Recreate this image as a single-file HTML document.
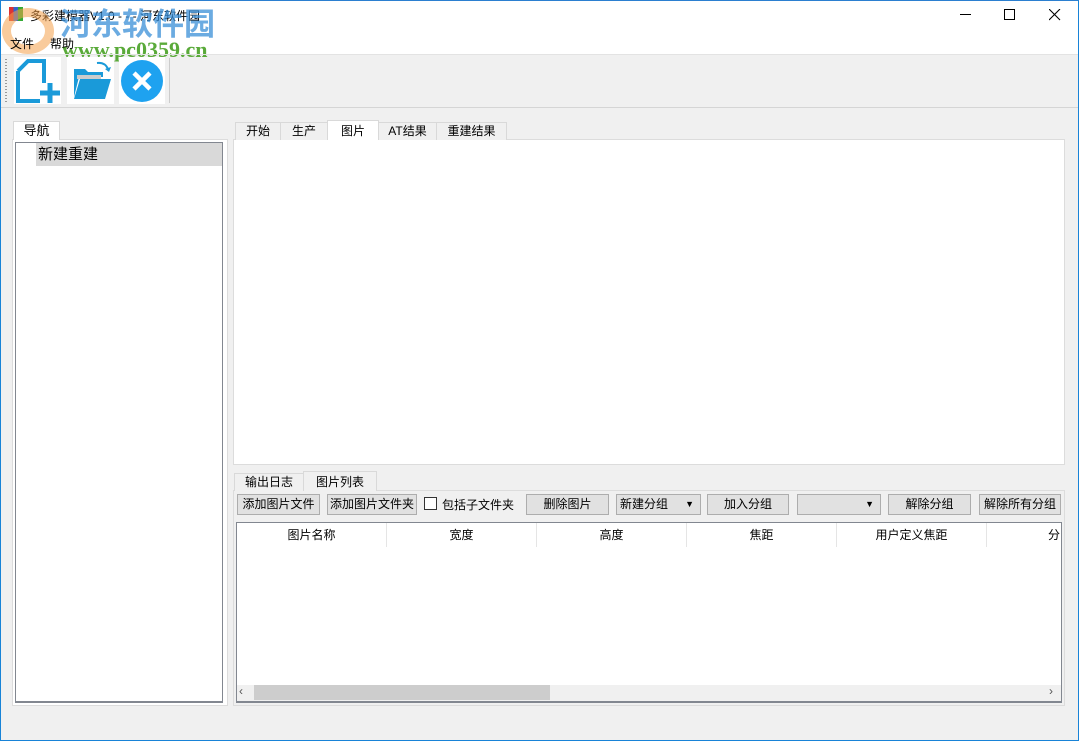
<!DOCTYPE html>
<html><head><meta charset="utf-8"><style>
*{margin:0;padding:0;box-sizing:border-box}
body{width:1079px;height:741px;overflow:hidden;background:#f0f0f0;font-family:"Liberation Sans","Noto Sans CJK SC",sans-serif;font-size:12px;color:#000;position:relative}
.a{position:absolute}
.frame{left:0;top:0;width:1079px;height:741px;border:1px solid #1883d7;border-top-color:#2b7fd0}
.btn{position:absolute;top:494px;height:21px;background:#e1e1e1;border:1px solid #adadad;text-align:center;line-height:19px;font-size:12px}
.tab{position:absolute;height:18px;background:#f0f0f0;border:1px solid #d9d9d9;border-bottom:none;text-align:center;line-height:17px;font-size:12px}
.col{position:absolute;top:523px;height:24px;line-height:24px;text-align:center;width:150px;border-right:1px solid #e5e5e5;font-size:12px}
</style></head><body>
<div class="a" style="left:0;top:0;width:1079px;height:54px;background:#fff"></div>
<div class="a" style="left:9px;top:7px;width:14px;height:14px;background:linear-gradient(90deg,#d33 0 33%,#36c 33% 66%,#3a3 66%)"></div>
<div class="a" style="left:30px;top:7px;font-size:12px">多彩建模器V1.0 - - - 河东软件园</div>
<div class="a" style="left:2px;top:8px;width:52px;height:46px;border-radius:50%;border:9px solid #f4a04a;opacity:.55"></div>
<div class="a" style="left:60px;top:2px;font-size:31px;font-weight:bold;color:#3a8fd8;opacity:.75;font-family:'Noto Sans CJK SC',sans-serif;line-height:40px">河东软件园</div>
<div class="a" style="left:62px;top:38px;font-size:22px;font-weight:bold;color:#5aaa3a;font-family:'Liberation Serif',serif;line-height:24px">www.pc0359.cn</div>
<div class="a" style="left:10px;top:35px;font-size:12px">文件</div>
<div class="a" style="left:50px;top:35px;font-size:12px">帮助</div>
<div class="a" style="left:960px;top:14px;width:11px;height:1px;background:#000"></div>
<div class="a" style="left:1004px;top:9px;width:11px;height:11px;border:1px solid #000"></div>
<svg class="a" style="left:1049px;top:9px" width="12" height="12"><path d="M0 0L11 11M11 0L0 11" stroke="#000" stroke-width="1.1"/></svg>
<div class="a" style="left:0;top:54px;width:1079px;height:1px;background:#e3e3e3"></div>
<div class="a" style="left:5px;top:59px;width:2px;height:43px;background:repeating-linear-gradient(#999 0 1px,transparent 1px 3px)"></div>
<div class="a" style="left:14px;top:57px;width:47px;height:47px;background:#fff"></div>
<svg class="a" style="left:14px;top:57px" width="47" height="47"><path d="M4 14L14 4H30V26M26 44H4V14" fill="none" stroke="#1a9ad9" stroke-width="4"/><path d="M36 26V46M26 36H46" stroke="#1a9ad9" stroke-width="5"/></svg>
<div class="a" style="left:67px;top:57px;width:47px;height:47px;background:#fff"></div>
<svg class="a" style="left:67px;top:57px" width="47" height="47"><path d="M7 12H18L21 15H36V20H12L7 40Z" fill="#1a9ad9"/><path d="M10 18H34V22H10Z" fill="#ccc"/><path d="M13 22H44L38 42H7Z" fill="#1a9ad9"/><path d="M30 6Q38 5 41 12" fill="none" stroke="#1a9ad9" stroke-width="2"/><path d="M38 12L42 15L44 10Z" fill="#1a9ad9"/></svg>
<div class="a" style="left:119px;top:57px;width:46px;height:47px;background:#fff"></div>
<svg class="a" style="left:119px;top:57px" width="46" height="47"><circle cx="23" cy="24" r="21" fill="#1ea2f0"/><path d="M15 16L31 32M31 16L15 32" stroke="#fff" stroke-width="4.5"/></svg>
<div class="a" style="left:169px;top:58px;width:1px;height:45px;background:#ccc"></div>
<div class="a" style="left:0;top:107px;width:1079px;height:1px;background:#d5d5d5"></div>
<div class="a" style="left:12px;top:139px;width:216px;height:567px;background:#fff;border:1px solid #dcdcdc"></div>
<div class="tab" style="left:13px;top:121px;width:47px;height:19px;background:#fff;font-size:13px">导航</div>
<div class="a" style="left:15px;top:142px;width:208px;height:561px;border:1px solid #828790;border-bottom:2px solid #828790;background:#fff"></div>
<div class="a" style="left:36px;top:143px;width:186px;height:23px;background:#d9d9d9;font-size:15px;line-height:23px;padding-left:2px">新建重建</div>
<div class="a" style="left:233px;top:139px;width:832px;height:326px;background:#fff;border:1px solid #dcdcdc"></div>
<div class="tab" style="left:235px;top:122px;width:46px">开始</div>
<div class="tab" style="left:280px;top:122px;width:48px">生产</div>
<div class="tab" style="left:327px;top:120px;width:52px;height:20px;background:#fff;line-height:20px">图片</div>
<div class="tab" style="left:378px;top:122px;width:59px">AT结果</div>
<div class="tab" style="left:436px;top:122px;width:71px">重建结果</div>
<div class="a" style="left:233px;top:490px;width:832px;height:216px;background:#f0f0f0;border:1px solid #dcdcdc"></div>
<div class="tab" style="left:234px;top:473px;width:70px">输出日志</div>
<div class="tab" style="left:303px;top:471px;width:74px;height:20px;background:#f0f0f0;line-height:20px">图片列表</div>
<div class="btn" style="left:237px;width:83px">添加图片文件</div>
<div class="btn" style="left:327px;width:90px">添加图片文件夹</div>
<div class="a" style="left:424px;top:497px;width:13px;height:13px;border:1px solid #333;background:#fff"></div>
<div class="a" style="left:442px;top:496px;font-size:12px">包括子文件夹</div>
<div class="btn" style="left:526px;width:83px">删除图片</div>
<div class="btn" style="left:616px;width:85px;text-align:left;padding-left:3px">新建分组<span style="position:absolute;right:6px;font-size:9px">▼</span></div>
<div class="btn" style="left:707px;width:82px">加入分组</div>
<div class="btn" style="left:797px;width:84px"><span style="position:absolute;right:6px;font-size:9px">▼</span></div>
<div class="btn" style="left:888px;width:83px">解除分组</div>
<div class="btn" style="left:979px;width:82px">解除所有分组</div>
<div class="a" style="left:236px;top:522px;width:826px;height:181px;background:#fff;border:1px solid #828790;border-bottom:2px solid #828790;overflow:hidden"></div>
<div class="col" style="left:237px">图片名称</div>
<div class="col" style="left:387px">宽度</div>
<div class="col" style="left:537px">高度</div>
<div class="col" style="left:687px">焦距</div>
<div class="col" style="left:837px">用户定义焦距</div>
<div class="a" style="left:1048px;top:523px;line-height:24px">分</div>
<div class="a" style="left:237px;top:685px;width:824px;height:16px;background:#f0f0f0"></div>
<div class="a" style="left:254px;top:685px;width:296px;height:15px;background:#cdcdcd"></div>
<div class="a" style="left:239px;top:684px;font-size:12px;color:#555">‹</div>
<div class="a" style="left:1049px;top:684px;font-size:12px;color:#555">›</div>
<div class="a frame"></div>
</body></html>
